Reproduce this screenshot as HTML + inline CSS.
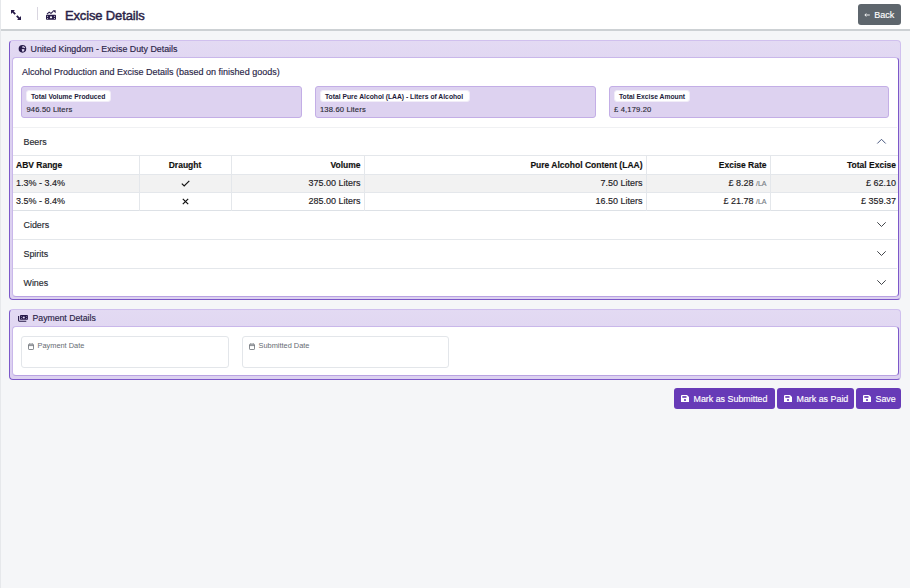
<!DOCTYPE html>
<html><head><meta charset="utf-8">
<style>
*{box-sizing:border-box;margin:0;padding:0}
html,body{width:910px;height:588px;overflow:hidden}
body{-webkit-text-stroke:0.15px currentColor;font-family:"Liberation Sans",sans-serif;background:#f5f6f8;position:relative;color:#212529}
.abs{position:absolute}
#leftline{left:0;top:0;width:1px;height:588px;background:#e6e8eb}
#hdr{left:1px;top:0;width:909px;height:31.4px;background:#fff;border-bottom:2px solid #cdd1d4}
.title{left:65px;top:7.6px;font-size:13px;letter-spacing:-0.15px;-webkit-text-stroke:0.45px #2a1f47;color:#2a1f47;white-space:nowrap;line-height:16px}
#sep{left:37px;top:7px;width:1px;height:13px;background:#d9d6e0}
#back{left:858px;top:4px;width:43px;height:21px;background:#5e666d;border-radius:3px;color:#fff;font-size:9px;line-height:21px}
.card{background:linear-gradient(#e3daf3,#dcd1f0 60px);border:1px solid #d0c0ee;border-left:1.5px solid #7c58c9;border-bottom:1.5px solid #7c58c9;border-radius:4px}
.cbody{background:#fff;border:1px solid #c9b7ea;border-right:1.5px solid #7c58c9;border-bottom:1px solid #b9a2e2;border-radius:4px}
.chtxt{font-size:8.85px;color:#2a1f47;white-space:nowrap;line-height:11px}
.stat{background:#ddd2f0;border:1px solid #c3aee6;border-radius:3px}
.badge{-webkit-text-stroke:0;background:#fff;border:1px solid #f1edf8;border-radius:3px;font-size:6.75px;font-weight:bold;color:#221a3a;white-space:nowrap;line-height:11px;padding-left:4px}
.val{font-size:7.6px;color:#2b2b36;white-space:nowrap;line-height:9px;letter-spacing:0.15px}
.hline{height:1px;background:#e4e7eb}
.acc{font-size:8.9px;color:#262a30;line-height:11px;white-space:nowrap}
table{border-collapse:collapse;position:absolute;left:13px;top:155px;width:885px;font-size:8.5px;color:#1e2125}
td,th{height:18px;padding:0 3px;border-left:1px solid #e4e7eb;border-top:1px solid #e4e7eb;white-space:nowrap;line-height:17px}
th{font-weight:bold;height:19px;color:#111;font-size:8.5px}
td{font-size:9px}
tr>*:first-child{border-left:none}
tr>*:last-child{padding-right:2px}
tr.r1 td{background:#f2f2f2}
table{border-bottom:1px solid #dde1e6}
.tl{text-align:left}.tc{text-align:center}.tr{text-align:right}
.la{font-size:7px;color:#777d85}
.inp{background:#fff;border:1px solid #e3e6ea;border-radius:3px}
.ph{-webkit-text-stroke:0;font-size:7.4px;color:#666b72;white-space:nowrap;line-height:9px}
.btn{background:#673ab7;border-radius:3px;color:#fff;font-size:8.9px;line-height:22.5px;white-space:nowrap}
</style></head><body>
<div class="abs" id="leftline"></div>
<div class="abs" id="hdr"></div>
<!-- expand icon -->
<svg class="abs" style="left:10px;top:9px" width="12" height="12" viewBox="0 0 12 12">
<path d="M1 1h4l-1.3 1.3 2.2 2.2-1.3 1.3-2.2-2.2L1 5z M11 11H7l1.3-1.3-2.2-2.2 1.3-1.3 2.2 2.2L11 7z" fill="#261a48"/>
</svg>
<div class="abs" id="sep"></div>
<!-- money icon -->
<svg class="abs" style="left:46px;top:10px" width="10" height="10" viewBox="0 0 10 10">
<path d="M1 4.2 L3.2 2.2 L5 3.4 L7.4 1.2" stroke="#261a48" stroke-width="1.1" fill="none"/>
<path d="M6.6 0.3h3v3z" fill="#261a48"/>
<rect x="0" y="4.8" width="10" height="5" rx="0.8" fill="#261a48"/>
<circle cx="5" cy="7.3" r="1.1" fill="#fff"/>
<circle cx="1.6" cy="6.3" r="0.5" fill="#fff"/><circle cx="8.4" cy="6.3" r="0.5" fill="#fff"/>
<circle cx="1.6" cy="8.4" r="0.5" fill="#fff"/><circle cx="8.4" cy="8.4" r="0.5" fill="#fff"/>
</svg>
<div class="abs title">Excise Details</div>
<div class="abs" id="back"><svg style="position:absolute;left:6px;top:9px" width="6" height="4" viewBox="0 0 6 4"><path d="M5.8 2H1 M2.4 0.5 L0.8 2 L2.4 3.5" stroke="#fff" stroke-width="0.9" fill="none"/></svg><span style="position:absolute;left:16.3px;top:0.7px">Back</span></div>

<!-- card 1 -->
<div class="abs card" style="left:9px;top:40px;width:892px;height:260px"></div>
<svg class="abs" style="left:18px;top:44px" width="9" height="9" viewBox="0 0 9 9">
<circle cx="4.45" cy="4.85" r="3.8" fill="#261a48"/>
<path d="M5 1.9 Q6.6 2.4 7.3 3.8 L6.2 4.3 L5.3 3.6 L4.6 4 L4.1 2.8z M3.7 5.3 L5.2 4.9 L6.6 5.6 L6 7.3 Q5 7.9 4.2 7.6z" fill="#e0d6f2"/>
</svg>
<div class="abs chtxt" style="left:30.5px;top:44.3px">United Kingdom - Excise Duty Details</div>
<div class="abs cbody" style="left:12px;top:57.3px;width:887px;height:239.7px"></div>
<div class="abs chtxt" style="left:22px;top:67px;font-size:9px">Alcohol Production and Excise Details (based on finished goods)</div>

<div class="abs stat" style="left:21px;top:86px;width:281px;height:32px"></div>
<div class="abs badge" style="left:26px;top:90px;width:84.5px;height:12px">Total Volume Produced</div>
<div class="abs val" style="left:26.5px;top:104.5px">946.50 Liters</div>

<div class="abs stat" style="left:315px;top:86px;width:281px;height:32px"></div>
<div class="abs badge" style="left:320px;top:90px;width:150px;height:12px">Total Pure Alcohol (LAA) - Liters of Alcohol</div>
<div class="abs val" style="left:320px;top:104.5px">138.60 Liters</div>

<div class="abs stat" style="left:609px;top:86px;width:280px;height:32px"></div>
<div class="abs badge" style="left:614px;top:90px;width:76px;height:12px">Total Excise Amount</div>
<div class="abs val" style="left:614px;top:104.5px">&#163; 4,179.20</div>

<div class="abs hline" style="left:13px;top:127px;width:884px;background:#f0f1f3"></div>
<div class="abs acc" style="left:23.5px;top:137px">Beers</div>
<svg class="abs" style="left:876px;top:137px" width="11" height="8" viewBox="0 0 11 8"><path d="M1.3 6.5 L5.5 2.3 L9.7 6.5" stroke="#3e4f78" stroke-width="0.95" fill="none"/></svg>

<table>
<tr><th class="tl" style="width:126px">ABV Range</th><th class="tc" style="width:92px">Draught</th><th class="tr" style="width:133px">Volume</th><th class="tr" style="width:282px">Pure Alcohol Content (LAA)</th><th class="tr" style="width:124px">Excise Rate</th><th class="tr">Total Excise</th></tr>
<tr class="r1"><td class="tl">1.3% - 3.4%</td><td class="tc"><svg width="9" height="7" viewBox="0 0 9 7" style="vertical-align:-0.5px"><path d="M0.8 3.6 L3.2 5.9 L8.3 0.8" stroke="#111" stroke-width="1.2" fill="none"/></svg></td><td class="tr">375.00 Liters</td><td class="tr">7.50 Liters</td><td class="tr">&#163; 8.28 <span class="la">/LA</span></td><td class="tr">&#163; 62.10</td></tr>
<tr><td class="tl">3.5% - 8.4%</td><td class="tc"><svg width="7" height="7" viewBox="0 0 7 7" style="vertical-align:-0.5px"><path d="M0.8 0.8 L6.2 6.2 M6.2 0.8 L0.8 6.2" stroke="#111" stroke-width="1.2" fill="none"/></svg></td><td class="tr">285.00 Liters</td><td class="tr">16.50 Liters</td><td class="tr">&#163; 21.78 <span class="la">/LA</span></td><td class="tr">&#163; 359.37</td></tr>
</table>

<div class="abs acc" style="left:23.5px;top:220px">Ciders</div>
<svg class="abs" style="left:876px;top:221px" width="11" height="8" viewBox="0 0 11 8"><path d="M1.3 1.3 L5.5 5.5 L9.7 1.3" stroke="#3a3d42" stroke-width="0.95" fill="none"/></svg>
<div class="abs hline" style="left:13px;top:239px;width:884px"></div>
<div class="abs acc" style="left:23.5px;top:249px">Spirits</div>
<svg class="abs" style="left:876px;top:250px" width="11" height="8" viewBox="0 0 11 8"><path d="M1.3 1.3 L5.5 5.5 L9.7 1.3" stroke="#3a3d42" stroke-width="0.95" fill="none"/></svg>
<div class="abs hline" style="left:13px;top:268px;width:884px"></div>
<div class="abs acc" style="left:23.5px;top:278px">Wines</div>
<svg class="abs" style="left:876px;top:279px" width="11" height="8" viewBox="0 0 11 8"><path d="M1.3 1.3 L5.5 5.5 L9.7 1.3" stroke="#3a3d42" stroke-width="0.95" fill="none"/></svg>

<!-- card 2 -->
<div class="abs card" style="left:9px;top:309px;width:892px;height:71px"></div>
<svg class="abs" style="left:17px;top:314px" width="12" height="9" viewBox="0 0 12 9">
<rect x="3" y="1" width="7.9" height="4.7" rx="0.4" fill="#261a48"/>
<path d="M1.6 2 V6.6 Q1.6 7.2 2.2 7.2 H9.3" stroke="#261a48" stroke-width="1.1" fill="none"/>
<circle cx="6.8" cy="3.5" r="1.1" fill="#e0d6f2"/>
<circle cx="4.5" cy="2.4" r="0.45" fill="#e0d6f2"/><circle cx="9.4" cy="2.4" r="0.45" fill="#e0d6f2"/>
<circle cx="4.5" cy="4.5" r="0.45" fill="#e0d6f2"/><circle cx="9.4" cy="4.5" r="0.45" fill="#e0d6f2"/>
</svg>
<div class="abs chtxt" style="left:32.5px;top:313.3px;font-size:8.7px">Payment Details</div>
<div class="abs cbody" style="left:12px;top:326px;width:887px;height:50.3px"></div>
<div class="abs inp" style="left:21px;top:336px;width:208px;height:32px"></div>
<svg class="abs" style="left:28px;top:343px" width="6" height="7" viewBox="0 0 6 7"><rect x="0.5" y="1.2" width="5" height="5.3" rx="0.6" stroke="#6a6f75" stroke-width="0.8" fill="none"/><path d="M0.5 2.6H5.5M1.8 0.3V1.6M4.2 0.3V1.6" stroke="#6a6f75" stroke-width="0.8"/></svg>
<div class="abs ph" style="left:37.5px;top:341px">Payment Date</div>
<div class="abs inp" style="left:242px;top:336px;width:207px;height:32px"></div>
<svg class="abs" style="left:248.5px;top:343px" width="6" height="7" viewBox="0 0 6 7"><rect x="0.5" y="1.2" width="5" height="5.3" rx="0.6" stroke="#6a6f75" stroke-width="0.8" fill="none"/><path d="M0.5 2.6H5.5M1.8 0.3V1.6M4.2 0.3V1.6" stroke="#6a6f75" stroke-width="0.8"/></svg>
<div class="abs ph" style="left:258.5px;top:341px">Submitted Date</div>

<!-- buttons -->
<div class="abs btn" style="left:674px;top:388px;width:101px;height:21px"></div>
<div class="abs btn" style="left:777px;top:388px;width:77px;height:21px"></div>
<div class="abs btn" style="left:856px;top:388px;width:45px;height:21px"></div>
<svg class="abs" style="left:681px;top:394.7px" width="8" height="7.5" viewBox="0 0 8 8" preserveAspectRatio="none"><path d="M0 1a1 1 0 0 1 1-1h5l2 2v5a1 1 0 0 1-1 1H1a1 1 0 0 1-1-1z" fill="#fff"/><rect x="1.3" y="1.2" width="4.2" height="1.8" fill="#673ab7"/><circle cx="4" cy="5.3" r="1.1" fill="#673ab7"/></svg>
<div class="abs btn" style="left:693.5px;top:388px;background:none">Mark as Submitted</div>
<svg class="abs" style="left:784px;top:394.7px" width="8" height="7.5" viewBox="0 0 8 8" preserveAspectRatio="none"><path d="M0 1a1 1 0 0 1 1-1h5l2 2v5a1 1 0 0 1-1 1H1a1 1 0 0 1-1-1z" fill="#fff"/><rect x="1.3" y="1.2" width="4.2" height="1.8" fill="#673ab7"/><circle cx="4" cy="5.3" r="1.1" fill="#673ab7"/></svg>
<div class="abs btn" style="left:796.5px;top:388px;background:none">Mark as Paid</div>
<svg class="abs" style="left:863px;top:394.7px" width="8" height="7.5" viewBox="0 0 8 8" preserveAspectRatio="none"><path d="M0 1a1 1 0 0 1 1-1h5l2 2v5a1 1 0 0 1-1 1H1a1 1 0 0 1-1-1z" fill="#fff"/><rect x="1.3" y="1.2" width="4.2" height="1.8" fill="#673ab7"/><circle cx="4" cy="5.3" r="1.1" fill="#673ab7"/></svg>
<div class="abs btn" style="left:875.5px;top:388px;background:none">Save</div>
</body></html>
